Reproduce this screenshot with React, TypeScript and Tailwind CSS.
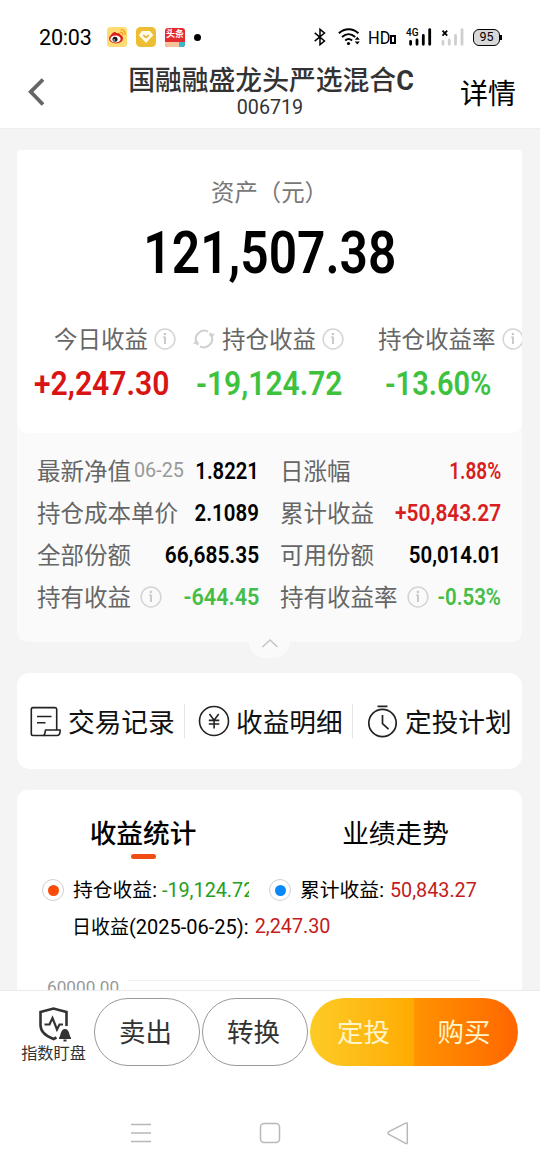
import clsx from 'clsx';

interface DetailRow {
  label: string;
  date?: string;
  info?: boolean;
  value: string;
  tone?: 'up' | 'down';
  scale: string;
}

const leftRows: DetailRow[] = [
  { label: '最新净值', date: '06-25', value: '1.8221', scale: 'scale-x-[0.86]' },
  { label: '持仓成本单价', value: '2.1089', scale: 'scale-x-[0.87]' },
  { label: '全部份额', value: '66,685.35', scale: 'scale-x-[0.89]' },
  { label: '持有收益', info: true, value: '-644.45', tone: 'down', scale: 'scale-x-[0.92]' },
];

const rightRows: DetailRow[] = [
  { label: '日涨幅', value: '1.88%', tone: 'up', scale: 'scale-x-[0.81]' },
  { label: '累计收益', value: '+50,843.27', tone: 'up', scale: 'scale-x-[0.89]' },
  { label: '可用份额', value: '50,014.01', scale: 'scale-x-[0.87]' },
  { label: '持有收益率', info: true, value: '-0.53%', tone: 'down', scale: 'scale-x-[0.87]' },
];

const InfoIcon = ({ className }: { className?: string }) => (
  <svg className={clsx('h-[22px] w-[22px] shrink-0', className)} viewBox="0 0 22 22" fill="none">
    <circle cx="11" cy="11" r="9.9" stroke="#d4d4d4" strokeWidth="1.5" />
    <path d="M11 8.7v7.3M9.3 9.3H11" stroke="#c8c8c8" strokeWidth="1.9" />
    <circle cx="10.9" cy="6" r="1.3" fill="#c8c8c8" />
  </svg>
);

const RefreshIcon = () => (
  <svg className="h-[22px] w-[22px] shrink-0" viewBox="0 0 22 22" fill="none" stroke="#d0d0d0" strokeWidth="2">
    <path d="M3.2 13.5A8.3 8.3 0 0 1 15 3.7M17 5a8.3 8.3 0 0 1 1.8 3" />
    <path d="M18.8 8.5A8.3 8.3 0 0 1 7 18.3M5 17a8.3 8.3 0 0 1-1.8-3" />
    <path d="M15.6 6.2l6.2-.6-2.8 4.6zM6.4 15.4l-6.2.6L3 11.400z" fill="#d0d0d0" stroke="none" />
  </svg>
);

const StatusBar = () => (
  <div className="flex h-[60px] shrink-0 items-center pt-[14px] pl-[39px] text-black">
    <span className="mt-px w-[68px] text-[21.5px] leading-none tracking-[-0.2px]">20:03</span>
    <svg className="h-5 w-5" viewBox="0 0 20 20">
      <rect width="20" height="20" rx="3.5" fill="#ffdc72" />
      <ellipse cx="9" cy="11.5" rx="7" ry="5" fill="#d9201b" />
      <path d="M4 8C6 5 8 4 9.500 6l3 .5 1 2z" fill="#d9201b" />
      <ellipse cx="8.5" cy="12" rx="5.2" ry="3.5" fill="#fff" />
      <circle cx="8" cy="12.3" r="2.5" fill="#181818" />
      <circle cx="7.2" cy="13" r=".8" fill="#fff" />
      <path d="M13 5.5c2-.5 3.300 1 2.800 2.800M13.500 2.800c3.200-.3 5.200 2 4.600 5" fill="none" stroke="#f29a22" strokeWidth="1.2" />
    </svg>
    <svg className="ml-[9px] h-5 w-5" viewBox="0 0 20 20">
      <rect width="20" height="20" rx="4.5" fill="#edbd33" />
      <path d="M6 4h8l3.300 4.200L10 16 2.700 8.200z" fill="#fffbe9" />
      <path d="M7.200 8.200L10 10.500l2.800-2.300" fill="none" stroke="#e3ae24" strokeWidth="1.5" />
    </svg>
    <div className="ml-[9px] h-[19px] w-5 overflow-hidden rounded-[3px] bg-[#e22c2f]">
      <div className="flex h-[14px] w-5 items-center justify-center text-[9px] leading-none font-bold whitespace-nowrap text-white">头条</div>
      <div className="flex h-[5px]">
        <span className="w-[14px] bg-[#f5c49a]" />
        <span className="w-[6px] bg-[#3bb9c9]" />
      </div>
    </div>
    <span className="ml-[9px] h-[7px] w-[7px] rounded-full bg-black" />

    {/* Connectivity */}
    <svg className="ml-[113px] h-[18px] w-3" viewBox="0 0 12 18" fill="none" stroke="#000" strokeWidth="1.5">
      <path d="M.7 4.800l9.800 8.200L6 16.700V1.300L10.500 5 .7 13.200" />
    </svg>
    <svg className="ml-[12px] h-[18px] w-[23px]" viewBox="0 0 23 18" fill="none" stroke="#000" strokeWidth="2">
      <path d="M.9 5.200c5.800-5.300 13.700-5.300 19.500 0M4 9c4-3.600 9.200-3.600 13.200 0M7.200 12.500c2.200-1.900 4.700-1.900 6.900 0" />
      <circle cx="10.500" cy="15.5" r="1.6" fill="#000" stroke="none" />
      <path d="M16.800 11.800l2.500-3 2.500 3zM16.800 13.500l2.500 3 2.500-3z" fill="#000" stroke="none" />
    </svg>
    <span className="mt-px ml-[7px] w-[22px] origin-left scale-x-[0.86] text-[19px] leading-none">HD</span>
    <span className="mt-[5px] h-[9px] w-[6px] border-2 border-black" />
    <svg className="ml-[10px] h-[18px] w-[26px]" viewBox="0 0 26 18">
      <text x="0" y="8" fontSize="10" fontWeight="500" textLength="12.5" lengthAdjust="spacingAndGlyphs">4G</text>
      <path d="M4.600 13.500v2.800M11 12v4.300M17.300 7.500v8.800M23.700 1.600v14.700" stroke="#000" strokeWidth="2.8" strokeLinecap="round" />
    </svg>
    <svg className="ml-[9px] h-[18px] w-[23px]" viewBox="0 0 23 18">
      <path d="M1.500 2.700l4.700 5M6.200 2.700l-4.700 5" stroke="#000" strokeWidth="1.7" />
      <path d="M2 13.500v2.800M8.200 12v4.300M14.500 7.500v8.800M21 1.600v14.700" stroke="#cfcfcf" strokeWidth="2.8" strokeLinecap="round" />
    </svg>
    <div className="ml-[9px] flex h-[17px] w-[27px] items-center justify-center rounded-[6px] border-[1.5px] border-black bg-[#d8d8d8] text-[12.5px] leading-none">
      95
    </div>
    <span className="h-[5px] w-[1.5px] bg-black" />
  </div>
);

const Header = () => (
  <header className="flex h-[69px] shrink-0 border-b border-[#eeeeee]">
    <svg className="mt-[17px] ml-[27px] h-[30px] w-[20px]" viewBox="0 0 20 30" fill="none">
      <path d="M16 2.500L3.700 14.800 16 27.500" stroke="#666" strokeWidth="3.8" />
    </svg>
    <div className="ml-[81px] flex w-[286px] flex-col items-center whitespace-nowrap text-[#333]">
      <h1 className="flex h-[39px] items-center pt-[3px] text-[26.8px] leading-none font-medium">
        国融融盛龙头严选混合<span className="text-[27px] font-bold">C</span>
      </h1>
      <span className="pr-[2px] text-[19.7px] leading-[17px]">006719</span>
    </div>
    <span className="mt-[20px] ml-[46px] text-[28px] leading-[30px] whitespace-nowrap text-black">详情</span>
  </header>
);

const Detail = ({ row }: { row: DetailRow }) => (
  <div className="flex h-[42px] items-center justify-between whitespace-nowrap">
    <div className="flex items-center text-[23.5px] leading-none text-[#666]">
      <span className="mt-1">{row.label}</span>
      {row.date && <span className="ml-[3px] text-[19.8px] text-[#999]">{row.date}</span>}
      {row.info && <InfoIcon className="ml-[9px]" />}
    </div>
    <div className="flex w-0 justify-end">
      <span
        className={clsx(
          'mt-[2px] origin-right text-[23.5px] leading-none font-semibold',
          row.scale,
          row.tone === 'up' && 'text-[#d81e1e]',
          row.tone === 'down' && 'text-[#46bd46]',
          !row.tone && 'text-black',
        )}
      >
        {row.value}
      </span>
    </div>
  </div>
);

const AssetCard = () => (
  <section className="mt-[21px] shrink-0 rounded-t-[4px] rounded-b-[10px] bg-[#fafafa]">
    <div className="h-[283px] overflow-hidden rounded-t-[4px] rounded-b-[10px] bg-white">
      <p className="flex h-[84px] items-center justify-center pt-[3px] text-[23.4px] leading-none text-[#777]">资产（元）</p>
      <div className="flex h-[36px] items-center justify-center pt-[3px]">
        <span className="scale-x-[0.85] text-[58.5px] leading-none font-semibold text-black">121,507.38</span>
      </div>
      <div className="mt-[57px] ml-[37px] flex h-[24px] items-center text-[23.5px] leading-none whitespace-nowrap text-[#666]">
        <span className="mt-1">今日收益</span>
        <InfoIcon className="ml-[6px]" />
        <div className="ml-[17px]">
          <RefreshIcon />
        </div>
        <span className="mt-1 ml-[7px]">持仓收益</span>
        <InfoIcon className="ml-[6px]" />
        <span className="mt-1 ml-[34px]">持仓收益率</span>
        <InfoIcon className="ml-[6px]" />
      </div>
      <div className="mt-[16px] ml-[17px] flex h-[34px] items-center text-[33.7px] leading-none font-semibold whitespace-nowrap">
        <span className="w-[162px] text-[#d81414]">
          <span className="inline-block origin-left scale-x-[0.895]">+2,247.30</span>
        </span>
        <span className="w-[189px] text-[#3ec23e]">
          <span className="inline-block origin-left scale-x-[0.89]">-19,124.72</span>
        </span>
        <span className="w-[110px] text-[#3ec23e]">
          <span className="inline-block origin-left scale-x-[0.86]">-13.60%</span>
        </span>
      </div>
    </div>
    <div className="flex gap-[21px] pt-[17px] pb-6 pl-5">
      <div className="w-[222px]">
        {leftRows.map((row) => (
          <Detail key={row.label} row={row} />
        ))}
      </div>
      <div className="w-[221px]">
        {rightRows.map((row) => (
          <Detail key={row.label} row={row} />
        ))}
      </div>
    </div>
  </section>
);

const CollapseHandle = () => (
  <div className="ml-[232px] flex h-4 w-[41px] shrink-0 items-start justify-center rounded-b-[20px] bg-[#fafafa]">
    <svg className="-mt-[4px] h-[10px] w-[18px]" viewBox="0 0 18 10" fill="none">
      <path d="M1.500 9L9 2l7.500 7" stroke="#c4c4c4" strokeWidth="1.5" />
    </svg>
  </div>
);

const Shortcuts = () => (
  <section className="mt-[15px] flex h-[96px] shrink-0 items-center rounded-[13px] bg-white text-[26.7px] leading-none whitespace-nowrap text-[#111]">
    <div className="flex w-[167px] items-center pl-[13px]">
      <svg className="mr-[7px] h-[31px] w-[31px]" viewBox="0 0 31 31" fill="none" stroke="#222" strokeWidth="1.6" strokeLinejoin="round">
        <path d="M14 29.500H3a1.700 1.700 0 0 1-1.700-1.700V3.300A1.700 1.700 0 0 1 3 1.600h22a1.700 1.700 0 0 1 1.700 1.700V24" />
        <path d="M13.500 29.500c1.700-.6 1.700-4.500 2-5.500h14.700c0 3-1 5.500-3.200 5.500z" />
        <path d="M7 10.500h14.500M7 16.700h8.500" />
      </svg>
      <span className="mt-1">交易记录</span>
    </div>
    <span className="h-[34px] w-px bg-[#e5e5e5]" />
    <div className="flex w-[167px] items-center pl-[13px]">
      <svg className="mr-[6px] h-8 w-8" viewBox="0 0 32 32" fill="none" stroke="#222" strokeWidth="1.6">
        <circle cx="16" cy="16" r="14.5" />
        <path d="M11.500 9l4.600 6.200L20.700 9M10.800 15.400h10.500M10.800 19h10.500M16.100 15v8.500" />
      </svg>
      <span className="mt-1">收益明细</span>
    </div>
    <span className="h-[34px] w-px bg-[#e5e5e5]" />
    <div className="flex items-center pl-[14px]">
      <svg className="mr-[7px] h-[34px] w-[31px]" viewBox="0 0 31 34" fill="none" stroke="#222" strokeWidth="1.7">
        <circle cx="15.5" cy="19" r="13.7" />
        <path d="M10.500 2.300h10M15.500 11v8.700l6 5.500" />
      </svg>
      <span className="mt-1">定投计划</span>
    </div>
  </section>
);

const Dot = ({ className }: { className: string }) => (
  <span className="flex h-[22px] w-[22px] shrink-0 items-center justify-center rounded-full border border-[#d0d0d0]">
    <span className={clsx('h-[11px] w-[11px] rounded-full', className)} />
  </span>
);

const Statistics = () => (
  <section className="mt-[21px] h-[260px] shrink-0 rounded-t-[10px] bg-white text-black">
    <div className="flex h-[79px] text-[26.7px] whitespace-nowrap">
      <div className="flex w-[252px] flex-col items-center pt-[28px]">
        <span className="leading-[32px] font-medium">收益统计</span>
        <span className="mt-[4px] h-[5px] w-[25px] rounded-full bg-[#f04d14]" />
      </div>
      <div className="flex w-[253px] justify-center pt-[28px]">
        <span className="leading-[32px]">业绩走势</span>
      </div>
    </div>
    <div className="mt-[10px] flex h-[22px] items-center pl-[25px] text-[19.8px] leading-none whitespace-nowrap">
      <Dot className="bg-[#fa4b0a]" />
      <div className="mt-[2px] ml-[9px] flex h-6 w-[176px] items-center overflow-hidden">
        持仓收益:<span className="ml-[5px] text-[#22a022]">-19,124.72</span>
      </div>
      <div className="ml-[20px]">
        <Dot className="bg-[#0a88fa]" />
      </div>
      <span className="mt-[2px] ml-[9px]">累计收益:</span>
      <span className="mt-[2px] ml-[6px] text-[#c41c1c]">50,843.27</span>
    </div>
    <div className="mt-[14px] flex h-[24px] items-center pl-[55px] text-[19px] leading-none whitespace-nowrap">
      日收益<span className="text-[20px]">(2025-06-25):</span>
      <span className="ml-[6px] text-[19.8px] text-[#c41c1c]">2,247.30</span>
    </div>
    <div className="mt-[38px] flex items-start pl-[30px]">
      <span className="w-[80px] text-[17.2px] leading-[20px] text-[#999]">60000.00</span>
      <span className="mt-[3px] h-px w-[353px] bg-[#f0f0f0]" />
    </div>
  </section>
);

const ActionBar = () => (
  <div className="flex h-[83px] shrink-0 border-t border-[#eaeaea] bg-white pt-[7px] pl-5">
    <div className="flex w-[67px] flex-col items-center text-[#333]">
      <svg className="mt-[8px] h-[36px] w-[34px]" viewBox="0 0 34 36" fill="none" stroke="#333" strokeWidth="2.6">
        <path d="M29.500 20V6L16.500 2.500 3.500 6v13c0 7 5 11 13 14l3-1.500" />
        <path d="M7.500 18.500h5l3-6.500 4.500 11.500 2.500-5H26" strokeWidth="2.2" />
        <path d="M22 33v-1.400c2-1.200 1.200-8.600 6-8.600s4 7.400 6 8.600V33zM26.500 33.500h3V35.500h-3z" fill="#333" stroke="none" />
      </svg>
      <span className="mt-[2px] text-[16.2px] leading-[20px] whitespace-nowrap">指数盯盘</span>
    </div>
    <button className="ml-[7px] h-[68px] w-[106px] rounded-[34px] border border-[#999] pt-[2px] pr-[3px] text-[26.5px] leading-none text-[#333]">卖出</button>
    <button className="ml-[2px] h-[68px] w-[106px] rounded-[34px] border border-[#999] pt-[2px] pr-[3px] text-[26.5px] leading-none text-[#333]">转换</button>
    <div className="ml-[2px] flex h-[68px] w-[208px] overflow-hidden rounded-[34px] text-[26.5px] leading-none text-[#fff5c8]">
      <button className="w-[104px] bg-linear-to-r from-[#fdcb24] to-[#ffab00] pt-[2px] pl-[3px]">定投</button>
      <button className="w-[104px] bg-linear-to-r from-[#ff9300] to-[#ff6500] pt-[2px] pr-[4px]">购买</button>
    </div>
  </div>
);

const SystemNav = () => (
  <nav className="flex flex-1 items-start bg-white pt-[49px]">
    <svg className="ml-[130px] h-[22px] w-[22px]" viewBox="0 0 22 22" stroke="#b8b8b8" strokeWidth="1.5">
      <path d="M1 2.500h20M1 11h20M1 19.500h20" />
    </svg>
    <svg className="ml-[107px] h-[22px] w-[22px]" viewBox="0 0 22 22" fill="none" stroke="#b8b8b8" strokeWidth="1.5">
      <rect x="1.5" y="1.5" width="19" height="19" rx="3.5" />
    </svg>
    <svg className="ml-[106px] h-[23px] w-[22px]" viewBox="0 0 22 23" fill="none" stroke="#b8b8b8" strokeWidth="1.5">
      <path d="M18.600 1.200L1.900 9.700c-1.200.7-1.200 2 0 2.700l16.700 9c1.100.6 1.700.2 1.700-.8V2c0-1-.7-1.300-1.700-.8z" />
    </svg>
  </nav>
);

export default function App() {
  return (
    <div className="flex h-[1170px] w-[540px] flex-col overflow-hidden bg-white font-['Roboto','Noto_Sans_CJK_SC',sans-serif]">
      <StatusBar />
      <Header />
      <main className="flex h-[861px] shrink-0 flex-col overflow-hidden bg-[#f4f4f4] pr-[18px] pl-[17px]">
        <AssetCard />
        <CollapseHandle />
        <Shortcuts />
        <Statistics />
      </main>
      <ActionBar />
      <SystemNav />
    </div>
  );
}
